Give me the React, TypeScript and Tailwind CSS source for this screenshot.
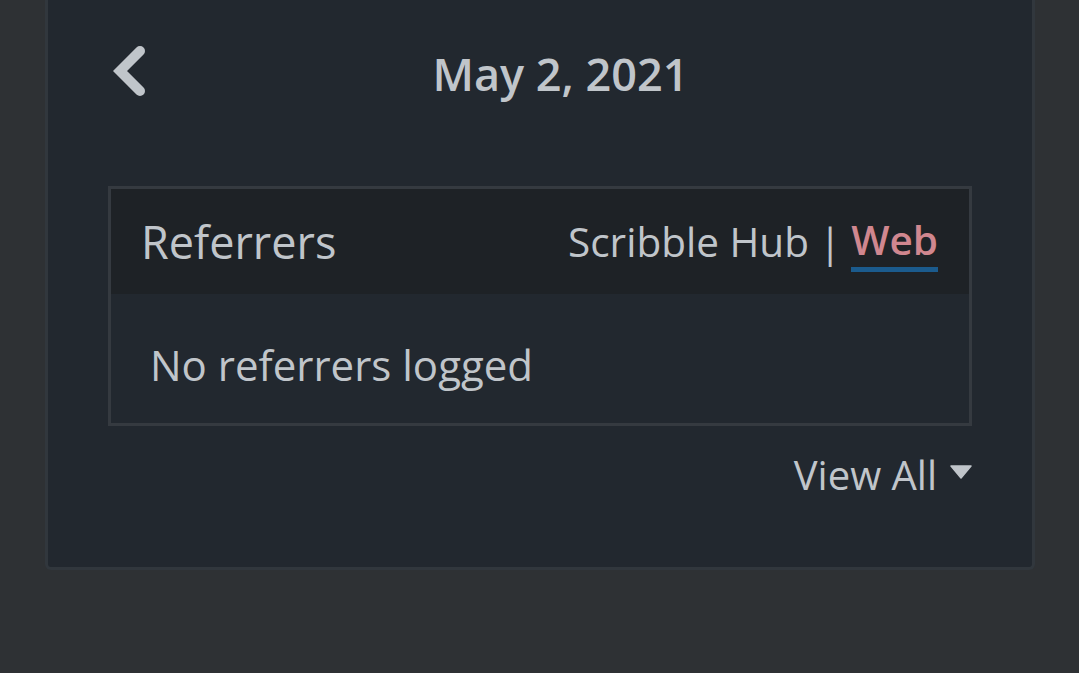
import React from "react";

const ChevronLeft: React.FC = () => (
  <svg width="36" height="52" viewBox="0 0 36 52" className="shrink-0">
    <path
      d="M27 6 L7 26 L27 46"
      fill="none"
      stroke="#c0c5ca"
      strokeWidth="10"
      strokeLinecap="round"
      strokeLinejoin="miter"
    />
  </svg>
);

const CaretDown: React.FC = () => (
  <svg width="22" height="14" viewBox="0 0 22 14" className="shrink-0">
    <path d="M1 1 H21 L11 13 Z" fill="#c0c5ca" stroke="#c0c5ca" strokeWidth="1.5" strokeLinejoin="round" />
  </svg>
);

const App: React.FC = () => {
  return (
    <div
      className="h-[673px] w-full bg-[#2e3134] overflow-hidden"
      style={{ fontFamily: '"Open Sans", "Noto Sans", sans-serif' }}
    >
      <div className="ml-[45px] w-[990px] h-[570px] bg-[#22282f] border-x-[3px] border-b-[3px] border-[#31373d] rounded-b-[6px] px-[60px] pt-[39px] text-[#c0c5ca]">
        {/* date header */}
        <div className="flex items-center h-[69px]">
          <div className="ml-[5px] -mt-[6px]">
            <ChevronLeft />
          </div>
          <div className="flex-1 text-center text-[45px] font-semibold leading-[69px]">
            May 2, 2021
          </div>
        </div>

        {/* referrers panel */}
        <div className="mt-[78px] border-[3px] border-[#353a40]">
          <div className="h-[105px] bg-[#1e2226] flex items-center justify-between pl-[30px] pr-[31px]">
            <span className="text-[45px] leading-[66px]">Referrers</span>
            <div className="flex items-center text-[40.5px] leading-[55px]">
              <span>Scribble Hub</span>
              <span className="mx-[10px]">|</span>
              <span className="inline-block border-b-[5px] border-[#1b5b8d] text-[#d0878f] font-semibold leading-[55px]">
                Web
              </span>
            </div>
          </div>
          <div className="pl-[39px] pt-[39px] pb-[27px] text-[42px] leading-[1.5]">
            No referrers logged
          </div>
        </div>

        {/* view all */}
        <div className="mt-[19px] flex items-center justify-end gap-[13px]">
          <span className="text-[40px] leading-[1.5]">View All</span>
          <div className="-mt-[6px]">
            <CaretDown />
          </div>
        </div>
      </div>
    </div>
  );
};

export default App;
